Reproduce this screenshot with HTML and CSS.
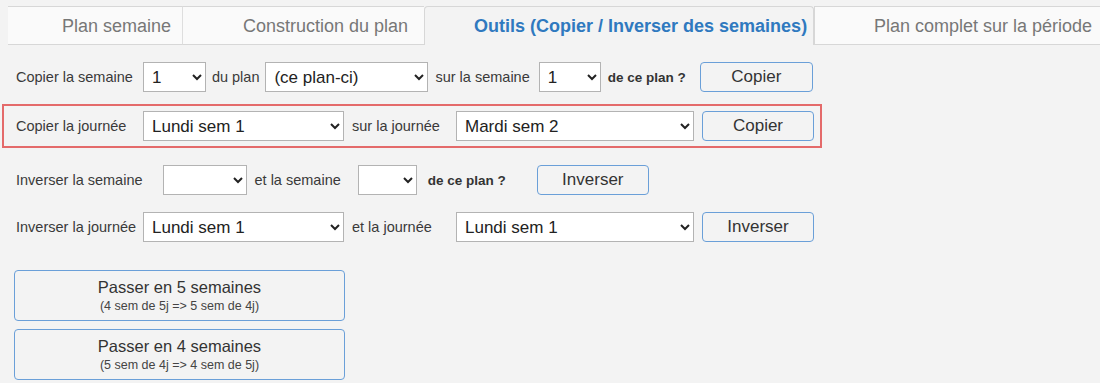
FILE: index.html
```html
<!DOCTYPE html>
<html>
<head>
  <title>Outils du plan</title>
  <link rel="stylesheet" href="styles.css">
</head>
<body>
  <div class="tabs">
    <div class="tab tab1">Plan semaine</div>
    <div class="tab tab2">Construction du plan</div>
    <div class="tab tab3 active">Outils (Copier / Inverser des semaines)</div>
    <div class="tab tab4">Plan complet sur la période</div>
  </div>

  <div class="content">
    <div class="row row1">
      <span class="lbl">Copier la semaine</span>
      <select class="sel sel-week"><option>1</option></select>
      <span class="lbl">du plan</span>
      <select class="sel sel-plan"><option>(ce plan-ci)</option></select>
      <span class="lbl">sur la semaine</span>
      <select class="sel sel-week2"><option>1</option></select>
      <b class="q">de ce plan ?</b>
      <button class="btn btn-copy1" type="button">Copier</button>
    </div>

    <div class="row day-row highlight">
      <span class="lbl lbl-day">Copier la journée</span>
      <select class="sel sel-day"><option>Lundi sem 1</option></select>
      <span class="lbl lbl-day2">sur la journée</span>
      <select class="sel sel-day2"><option>Mardi sem 2</option></select>
      <button class="btn btn-day" type="button">Copier</button>
    </div>

    <div class="row row3">
      <span class="lbl">Inverser la semaine</span>
      <select class="sel sel-inv"><option></option></select>
      <span class="lbl">et la semaine</span>
      <select class="sel sel-inv2"><option></option></select>
      <b class="q">de ce plan ?</b>
      <button class="btn btn-inv" type="button">Inverser</button>
    </div>

    <div class="row day-row">
      <span class="lbl lbl-day">Inverser la journée</span>
      <select class="sel sel-day"><option>Lundi sem 1</option></select>
      <span class="lbl lbl-day2">et la journée</span>
      <select class="sel sel-day2"><option>Lundi sem 1</option></select>
      <button class="btn btn-day" type="button">Inverser</button>
    </div>

    <div class="big-buttons">
      <button class="btn big" type="button">Passer en 5 semaines<br><small>(4 sem de 5j =&gt; 5 sem de 4j)</small></button>
      <button class="btn big" type="button">Passer en 4 semaines<br><small>(5 sem de 4j =&gt; 4 sem de 5j)</small></button>
    </div>
  </div>
</body>
</html>
```

FILE: styles.css
```css
html, body {
  margin: 0;
  background-color: #f3f3f3;
  font-family: "Liberation Sans", Arial, sans-serif;
  color: #333;
}

/* onglets */
.tabs {
  display: flex;
  margin: 6px 0 0 8px;
  height: 39px;
}
.tab {
  box-sizing: border-box;
  height: 39px;
  padding-top: 9px;
  font-size: 18px;
  color: #777;
  background-color: #fafafa;
  border-top: 1px solid #d7d7d7;
  border-bottom: 1px solid #d7d7d7;
  white-space: nowrap;
}
.tab1 { width: 175px; padding-left: 54px; border-right: 1px solid #dedede; }
.tab2 { width: 241px; padding-left: 60px; }
.tab3 { width: 390px; padding-left: 49px; }
.tab4 { flex: 1; padding-left: 59px; border-left: 1px solid #d7d7d7; }
.tab.active {
  background-color: #f3f3f3;
  color: #2f79bf;
  font-weight: bold;
  border: 1px solid #d7d7d7;
  border-bottom: none;
  border-top-left-radius: 4px;
  border-top-right-radius: 4px;
}

.content {
  padding: 17px 0 0 0;
}

.row {
  display: flex;
  align-items: center;
  height: 30px;
  padding-left: 16px;
  font-size: 14.5px;
  color: #3a3a3a;
}

.sel {
  box-sizing: border-box;
  height: 30px;
  border: 1px solid #b3b3b3;
  border-radius: 0;
  background-color: #fff;
  color: #222;
  font-family: "Liberation Sans", Arial, sans-serif;
  font-size: 17px;
  padding: 0 4px;
}

.btn {
  box-sizing: border-box;
  height: 30px;
  border: 1px solid #6a9fd8;
  border-radius: 4px;
  background-color: #f3f3f3;
  color: #333;
  font-family: "Liberation Sans", Arial, sans-serif;
  font-size: 17px;
  cursor: pointer;
}

.q { font-size: 13.5px; color: #333; }

/* ligne 1 */
.row1 .sel-week { width: 63px; margin: 0 6px 0 10px; }
.row1 .sel-plan { width: 163px; margin: 0 7px 0 6px; }
.row1 .sel-week2 { width: 62px; margin: 0 7px 0 9px; }
.row1 .btn-copy1 { width: 113px; margin-left: 14px; }

/* lignes journée */
.day-row { margin-top: 12px; }
.lbl-day { width: 127px; white-space: nowrap; }
.sel-day { width: 201px; }
.lbl-day2 { width: 112px; padding-left: 8px; box-sizing: border-box; }
.sel-day2 { width: 238px; }
.btn-day { width: 112px; margin-left: 8px; }

.highlight {
  height: 44px;
  margin-left: 2px;
  width: 820px;
  box-sizing: border-box;
  padding-left: 12px;
  border: 2px solid #e46a6a;
}

/* ligne 3 */
.row3 { margin-top: 17px; margin-bottom: 17px; }
.row3 .sel-inv { width: 84px; margin: 0 8px 0 20px; }
.row3 .sel-inv2 { width: 59px; margin: 0 11px 0 17px; }
.row3 .btn-inv { width: 112px; margin-left: 31px; }

.big-buttons {
  display: flex;
  flex-direction: column;
  gap: 8px;
  margin: 28px 0 0 14px;
}
.btn.big {
  width: 331px;
  height: 51px;
  font-size: 16.5px;
  line-height: 17px;
  padding: 2px 0 0 0;
}
.btn.big small {
  font-size: 12.5px;
  color: #444;
}
```
